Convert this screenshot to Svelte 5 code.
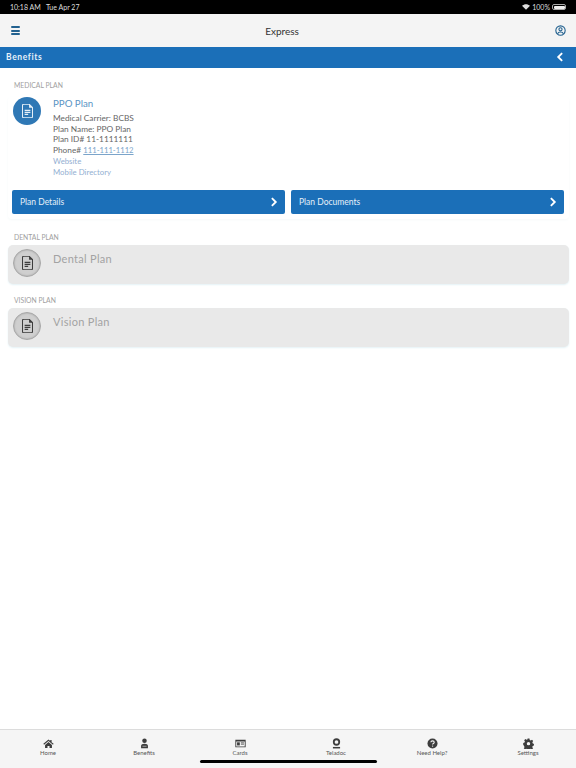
<script>
  const docPath = "M2 0h6l4 4v10a1.5 1.5 0 0 1-1.500 1.500H2A1.500 1.500 0 0 1 .5 14V1.500A1.500 1.500 0 0 1 2 0z";
  const plans = [
    { label: "DENTAL PLAN", name: "Dental Plan" },
    { label: "VISION PLAN", name: "Vision Plan" }
  ];
  const tabs = ["Home", "Benefits", "Cards", "Teladoc", "Need Help?", "Settings"];
</script>

{#snippet doc()}
  <svg class="doc" viewBox="0 0 12.500 15.500">
    <path d={docPath} fill="none" stroke="currentColor" stroke-width="1.300"/>
    <path d="M8 0v4h4z" fill="currentColor"/>
    <path d="M3 7h6.500M3 9.300h6.500M3 11.600h4" stroke="currentColor" stroke-width="1.300"/>
  </svg>
{/snippet}

{#snippet chevron(d)}
  <svg class="chev" viewBox="0 0 10 14"><path {d} fill="none" stroke="#fff" stroke-width="2.600"/></svg>
{/snippet}

{#snippet tabIcon(name)}
  <svg class="tab-icon" viewBox="0 0 16 16" fill="#3d3d3d">
    {#if name === "Home"}
      <path d="M8 2 .5 8.500l1 1.200L8 4.200l6.500 5.500 1-1.200L12.500 6V2.800h-2v1.500z"/>
      <path d="M3 10 8 5.800l5 4.200v4.500H9.500v-3h-3v3H3z"/>
    {:else if name === "Benefits"}
      <circle cx="8" cy="4" r="3.300"/>
      <path d="M3 15v-3.500C3 9.500 5 8.500 8 8.500s5 1 5 3V15z"/>
      <path d="M5 12h6" stroke="#f5f5f5" stroke-width=".8"/>
    {:else if name === "Cards"}
      <path fill-rule="evenodd" d="M.5 2.500h15v11H.5zM1.800 5v7.200h12.400V5z"/>
      <rect x="3" y="6.300" width="4" height="4.500"/>
      <path d="M8.500 7h4.500M8.500 9h4.500" stroke="#3d3d3d" stroke-width="1.100"/>
    {:else if name === "Teladoc"}
      <path fill-rule="evenodd" d="M8 .5a5.300 5.300 0 1 1 0 10.600A5.300 5.300 0 0 1 8 .5zm0 2.600a2.700 2.700 0 1 0 0 5.400 2.700 2.700 0 0 0 0-5.400z"/>
      <rect x="2.800" y="13" width="10.400" height="2.200"/>
    {:else if name === "Need Help?"}
      <circle cx="8" cy="8" r="7.300"/>
      <path d="M5.600 6.300C5.700 4.900 6.800 4.200 8 4.200s2.500.7 2.500 2c0 1.800-2.400 1.800-2.400 3.300" fill="none" stroke="#f5f5f5" stroke-width="1.600"/>
      <circle cx="8.100" cy="11.800" r="1" fill="#f5f5f5"/>
    {:else}
      <path fill-rule="evenodd" d="M6.600.8h2.800l.4 2 1.500.7 1.800-1 1.700 2-1.200 1.700.4 1.600 1.900.8v2.400l-1.900.7-.5 1.600 1.200 1.700-1.800 1.700-1.700-1-1.500.6-.5 1.900H6.600l-.4-1.900-1.600-.6-1.700 1-1.800-1.800 1.100-1.600-.6-1.600L.3 9.700V7.300l1.900-.7.6-1.600-1.100-1.600 1.800-1.900 1.700 1 1.500-.7zM8 5.700a2.500 2.500 0 1 0 0 5 2.500 2.500 0 0 0 0-5z"/>
    {/if}
  </svg>
{/snippet}

<div class="screen">
  <div class="status">
    <span class="status-left">10:18 AM&nbsp;&nbsp; Tue Apr 27</span>
    <span class="status-right">
      <svg class="wifi" viewBox="0 0 16 12"><path d="M8 11.500 0 3.500C4.500-.8 11.500-.8 16 3.500z" fill="#ddd"/></svg>
      100%
      <span class="battery"><span class="battery-fill"></span></span>
    </span>
  </div>

  <header class="nav">
    <div class="burger"><span></span><span></span><span></span></div>
    <span class="title">Express</span>
    <svg class="user" viewBox="0 0 16 16" fill="none" stroke="#22618f" stroke-width="1.600">
      <circle cx="8" cy="8" r="6.800"/>
      <circle cx="8" cy="6.300" r="2.300"/>
      <path d="M3.800 12.800c.6-2 2.300-2.700 4.200-2.700s3.600.7 4.200 2.700"/>
    </svg>
  </header>

  <div class="bar">
    <span>Benefits</span>
    {@render chevron("M8 1.500 2.500 7 8 12.500")}
  </div>

  <main class="content">
    <div class="label first">MEDICAL PLAN</div>
    <section class="plan-box">
      <div class="plan-row">
        <div class="circle blue">{@render doc()}</div>
        <div class="info">
          <div class="plan-name">PPO Plan</div>
          <div class="line">Medical Carrier: BCBS</div>
          <div class="line">Plan Name: PPO Plan</div>
          <div class="line">Plan ID# 11-1111111</div>
          <div class="line">Phone# <span class="phone">111-111-1112</span></div>
          <div class="line link">Website</div>
          <div class="line link">Mobile Directory</div>
        </div>
      </div>
      <div class="buttons">
        <div class="btn"><span>Plan Details</span>{@render chevron("M2 1.500 7.500 7 2 12.500")}</div>
        <div class="btn"><span>Plan Documents</span>{@render chevron("M2 1.500 7.500 7 2 12.500")}</div>
      </div>
    </section>

    {#each plans as p}
      <div class="label">{p.label}</div>
      <div class="card">
        <div class="circle grey">{@render doc()}</div>
        <div class="card-name">{p.name}</div>
      </div>
    {/each}
  </main>

  <footer class="tabs">
    {#each tabs as t}
      <div class="tab">
        {@render tabIcon(t)}
        <span>{t}</span>
      </div>
    {/each}
    <div class="home-indicator"></div>
  </footer>
</div>

<style>
  :global(body) { margin: 0; background: #fff; }
  .screen {
    width: 576px; height: 768px; display: flex; flex-direction: column;
    font-family: Lato, "Open Sans", sans-serif; color: #555; overflow: hidden; position: relative;
  }
  .status {
    height: 14px; flex: none; background: #000; color: #ddd; font-size: 7px;
    display: flex; justify-content: space-between; align-items: center; padding: 0 10px 0 10px;
  }
  .status-right { display: flex; align-items: center; gap: 2px; }
  .wifi { width: 8px; height: 6px; }
  .battery { width: 14px; height: 6px; border: 1px solid #aaa; border-radius: 2px; box-sizing: border-box; padding: .5px; display: flex; }
  .battery-fill { flex: 1; background: #eee; border-radius: 1px; }
  .nav {
    height: 33px; flex: none; background: #f4f4f4; display: flex; align-items: center;
    justify-content: space-between; padding: 0 10px 0 11px; position: relative;
  }
  .burger { width: 9px; display: flex; flex-direction: column; gap: 1.600px; }
  .burger span { height: 2px; background: #22618f; border-radius: 1px; }
  .title { position: absolute; left: 0; right: 12px; text-align: center; font-size: 10px; color: #333; }
  .user { width: 11px; height: 11px; }
  .bar {
    height: 21px; flex: none; background: #1b6fb8; color: #e8f2fa; display: flex; align-items: center;
    justify-content: space-between; padding: 0 12px 2px 6px; font-size: 8.500px; font-weight: 700; letter-spacing: .6px;
    box-sizing: border-box;
  }
  .chev { width: 8px; height: 10px; flex: none; }
  .content { flex: 1; padding: 0 7px 0 8px; }
  .label { font-size: 6.800px; color: #a0a0a0; height: 8px; line-height: 8px; margin: 13px 0 4px 6px; }
  .label.first { margin-top: 13px; }
  .plan-box { box-shadow: 0 1px 3px #f5f9fa; border-radius: 4px; padding-bottom: 5px; margin-top: 8px; }
  .plan-row { display: flex; gap: 12px; padding: 0 0 0 5px; }
  .circle { width: 28px; height: 28px; border-radius: 50%; flex: none; display: flex; align-items: center; justify-content: center; box-sizing: border-box; }
  .blue { background: #2f78b5; color: #e6f0f8; }
  .grey { background: #cfcfcf; border: 1px solid #a8a8a8; color: #3d3d3d; box-shadow: inset 0 0 2px #999; }
  .doc { width: 11px; height: 14px; }
  .plan-name { font-size: 9.700px; color: #5a94c4; line-height: 12px; margin-bottom: 4px; }
  .line { font-size: 8.300px; line-height: 10.700px; color: #666; }
  .phone { color: #7ba4ca; text-decoration: underline; font-size: 7.700px; }
  .link { font-size: 7.800px; color: #93afd2; }
  .buttons { display: flex; gap: 6px; padding: 0 5px 0 4px; margin-top: 13px; }
  .btn {
    flex: 1; height: 24px; background: #1b6fb8; border-radius: 2px; color: #e6f0f8; font-size: 8.500px;
    display: flex; align-items: center; justify-content: space-between; padding: 0 7px 0 8px;
  }
  .plan-box + .label { margin-top: 14px; }
  .card {
    height: 39px; background: #e9e9e9; border-radius: 5px; display: flex; gap: 12px; padding: 4px 0 0 5px;
    box-sizing: border-box; box-shadow: 0 1px 2px #e4f2f6; width: 561px;
  }
  .card + .label { margin-top: 12px; }
  .card-name { font-size: 11px; color: #a3a3a3; padding-top: 3px; letter-spacing: .3px; }
  .tabs {
    height: 39px; flex: none; background: #f5f5f5; border-top: 1px solid #dcdcdc; display: grid;
    grid-template-columns: repeat(6, 1fr); position: relative; box-sizing: border-box;
  }
  .tab { display: flex; flex-direction: column; align-items: center; padding-top: 8px; font-size: 6px; color: #555; gap: 0; }
  .tab-icon { width: 11px; height: 11px; }
  .home-indicator { position: absolute; left: 200px; top: 30px; width: 177px; height: 3px; border-radius: 2px; background: #000; }
</style>
